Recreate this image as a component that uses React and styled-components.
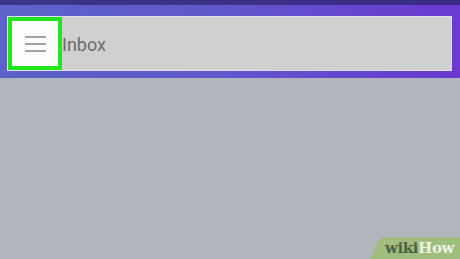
import React from 'react';
import styled, { createGlobalStyle } from 'styled-components';

const GlobalStyle = createGlobalStyle`
  html, body {
    margin: 0;
    padding: 0;
    background: #b4b6be;
  }
  body {
    font-family: Roboto, "Noto Sans", "Liberation Sans", sans-serif;
  }
`;

const Page = styled.div`
  width: 460px;
  height: 259px;
  display: flex;
  flex-direction: column;
  overflow: hidden;
`;

const StatusBar = styled.div`
  height: 5px;
  background: linear-gradient(90deg, #3a3683 0%, #3c2f86 60%, #3a2a84 100%);
`;

const Header = styled.header`
  height: 73px;
  box-sizing: border-box;
  padding: 12px 9px 7px 8px;
  background: linear-gradient(90deg, #5b62c9 0%, #5f5acb 45%, #6647cf 75%, #6a38cf 100%);
  box-shadow: 0 1px 1px rgba(90, 90, 120, 0.35);
`;

const SearchBox = styled.div`
  height: 53px;
  display: flex;
  align-items: center;
  background: #d0d0d0;
  box-shadow: 0 0 0 1px #e2def2;
`;

const MenuButton = styled.button`
  width: 54px;
  height: 53px;
  box-sizing: border-box;
  border: 4px solid #21e51f;
  background: #fbfbfb;
  display: flex;
  flex-direction: column;
  justify-content: center;
  align-items: center;
  gap: 5px;
  padding: 0;
`;

const Bar = styled.span`
  display: block;
  width: 21px;
  height: 2px;
  background: #a2a2a2;
`;

const Label = styled.span`
  font-size: 18px;
  color: #6b6b6b;
  padding-top: 1px;
`;

const Content = styled.main`
  flex: 1;
  position: relative;
  background: #b3b5bd;
`;

const Watermark = styled.div`
  position: absolute;
  right: 0;
  bottom: 0;
  width: 90px;
  height: 22px;
  background: #9fbd7c;
  clip-path: polygon(11px 0, 100% 0, 100% 100%, 0 100%);
  display: flex;
  align-items: center;
  padding-left: 15px;
  box-sizing: border-box;
  font-family: "DejaVu Serif", "Liberation Serif", serif;
  font-weight: bold;
  font-size: 15px;
  letter-spacing: -0.4px;
`;

const Wiki = styled.span`
  color: #4f5f44;
`;

const How = styled.span`
  color: #eef3e6;
`;

export default function App() {
  return (
    <>
      <GlobalStyle />
      <Page>
        <StatusBar />
        <Header>
          <SearchBox>
            <MenuButton aria-label="Menu">
              <Bar />
              <Bar />
              <Bar />
            </MenuButton>
            <Label>Inbox</Label>
          </SearchBox>
        </Header>
        <Content>
          <Watermark>
            <Wiki>wiki</Wiki>
            <How>How</How>
          </Watermark>
        </Content>
      </Page>
    </>
  );
}
